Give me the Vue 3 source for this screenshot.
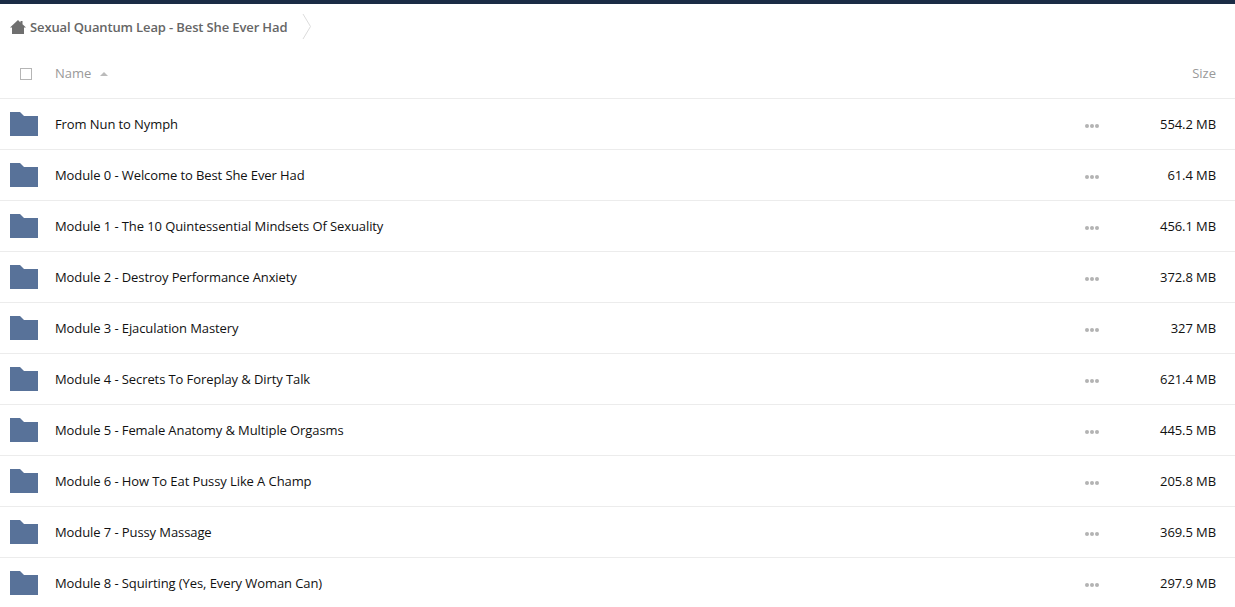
<script setup>
const folders = [
  { name: 'From Nun to Nymph', size: '554.2 MB' },
  { name: 'Module 0 - Welcome to Best She Ever Had', size: '61.4 MB' },
  { name: 'Module 1 - The 10 Quintessential Mindsets Of Sexuality', size: '456.1 MB' },
  { name: 'Module 2 - Destroy Performance Anxiety', size: '372.8 MB' },
  { name: 'Module 3 - Ejaculation Mastery', size: '327 MB' },
  { name: 'Module 4 - Secrets To Foreplay & Dirty Talk', size: '621.4 MB' },
  { name: 'Module 5 - Female Anatomy & Multiple Orgasms', size: '445.5 MB' },
  { name: 'Module 6 - How To Eat Pussy Like A Champ', size: '205.8 MB' },
  { name: 'Module 7 - Pussy Massage', size: '369.5 MB' },
  { name: 'Module 8 - Squirting (Yes, Every Woman Can)', size: '297.9 MB' },
]
</script>

<template>
  <div class="page">
    <div class="crumbs">
      <svg class="home" width="16" height="14" viewBox="0 0 16 14">
        <path d="M8 0 L10.5 2.4 V1 H12.5 V4.3 L16 7.6 H14 V14 H2 V7.6 H0 Z" fill="#6f6f6f" />
      </svg>
      <span class="crumb">Sexual Quantum Leap - Best She Ever Had</span>
      <svg class="chevron" width="10" height="26" viewBox="0 0 10 26">
        <path d="M1 0 L8.5 12.5 L1 25" fill="none" stroke="#dcdcdc" stroke-width="1" />
      </svg>
    </div>

    <div class="head">
      <span class="check"></span>
      <span class="head-name">Name</span>
      <span class="sort"></span>
      <span class="head-size">Size</span>
    </div>

    <div v-for="item in folders" :key="item.name" class="row">
      <svg class="folder" width="28" height="24" viewBox="0 0 28 24">
        <path d="M0 0 H10 L14 4 H28 V24 H0 Z" fill="#587299" />
      </svg>
      <span class="name">{{ item.name }}</span>
      <span class="dots"><i></i><i></i><i></i></span>
      <span class="size">{{ item.size }}</span>
    </div>
  </div>
</template>

<style scoped>
.page {
  height: 607px;
  overflow: hidden;
  background: #fff;
  border-top: 4px solid #1b2c45;
  box-sizing: border-box;
  font-family: "Open Sans", "Liberation Sans", sans-serif;
  font-size: 13px;
  color: #111;
}

.crumbs {
  display: flex;
  align-items: center;
  height: 46px;
  padding-left: 10px;
}

.home {
  margin-right: 4px;
}

.crumb {
  font-weight: 600;
  letter-spacing: -0.13px;
  color: #666;
}

.chevron {
  margin-left: 15px;
}

.head {
  display: flex;
  align-items: center;
  height: 48px;
  border-bottom: 1px solid #ececec;
  color: #999;
}

.check {
  width: 10px;
  height: 10px;
  border: 1px solid #b5b5b5;
  margin-left: 20px;
}

.head-name {
  margin-left: 23px;
  margin-top: -2px;
}

.sort {
  width: 0;
  height: 0;
  border: 4px solid transparent;
  border-top: 0;
  border-bottom: 4px solid #bbb;
  margin-left: 9px;
}

.head-size {
  margin-left: auto;
  margin-top: -2px;
  padding-right: 19px;
}

.row {
  display: flex;
  align-items: center;
  height: 50px;
  border-bottom: 1px solid #ececec;
}

.folder {
  margin-left: 10px;
  flex: none;
}

.name {
  margin-left: 17px;
  flex: 1;
  letter-spacing: -0.09px;
}

.dots {
  display: flex;
  gap: 1px;
  margin-top: 3px;
}

.dots i {
  width: 4px;
  height: 4px;
  border-radius: 50%;
  background: #b3b3b3;
}

.size {
  width: 136px;
  padding-right: 19px;
  box-sizing: border-box;
  text-align: right;
  letter-spacing: -0.09px;
}
</style>

<style>
html, body {
  margin: 0;
  background: #fff;
}
</style>
